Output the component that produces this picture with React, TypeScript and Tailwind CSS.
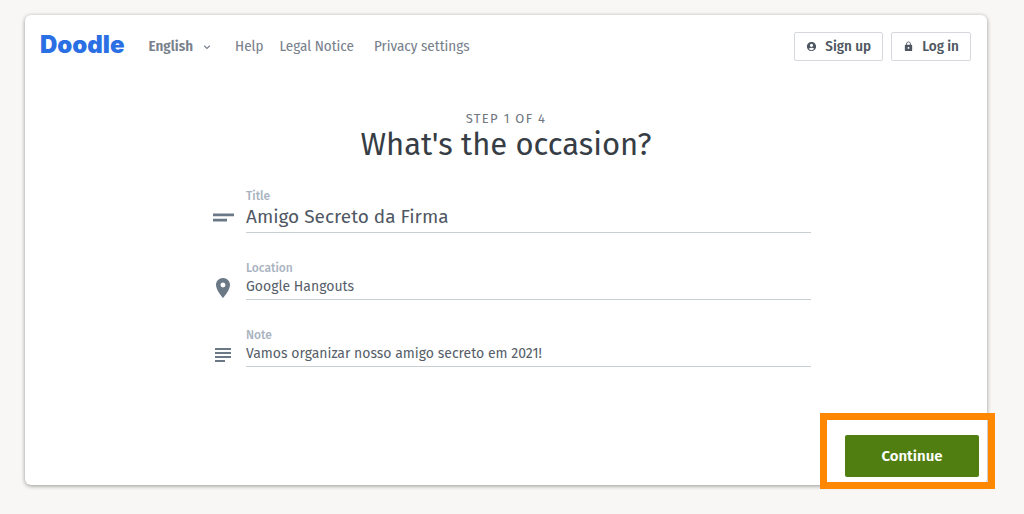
import { useState } from "react";
import type { ReactNode } from "react";
import { MdAccountCircle, MdLock, MdPlace, MdSubject } from "react-icons/md";

type FieldProps = {
  id: string;
  label: string;
  initial: string;
  icon: ReactNode;
  large?: boolean;
};

function ShortTextIcon() {
  return (
    <svg className="size-6" viewBox="0 0 24 24" fill="currentColor">
      <path d="M2 8.5h21v2.7H2zM2 13.7h14v2.7H2z" />
    </svg>
  );
}

function Field({ id, label, initial, icon, large = false }: FieldProps) {
  const [value, setValue] = useState(initial);
  return (
    <div className="flex items-end gap-[11px] pl-2.5">
      <span className={large ? "pb-1 text-[#6b7885]" : "text-[#6b7885]"}>{icon}</span>
      <div className="flex min-w-0 flex-1 flex-col border-b border-[#c8cfd3]">
        <label htmlFor={id} className="text-xs leading-4 font-medium text-[#a9b3c1]">
          {label}
        </label>
        <input
          id={id}
          type="text"
          value={value}
          onChange={(e) => setValue(e.target.value)}
          className={
            large
              ? "h-7 w-full bg-transparent pb-0.5 text-[19px] text-[#4f5864] outline-none"
              : "h-[23px] w-full bg-transparent pb-0.5 text-sm text-[#565e69] outline-none"
          }
        />
      </div>
    </div>
  );
}

export default function App() {
  return (
    <div className="min-h-screen bg-[#f8f7f5] pt-[15px] pr-[37px] pb-[29px] pl-[25px] font-['Fira_Sans','Noto_Sans',sans-serif]">
      <div className="rounded-md bg-white shadow-[0_1px_4px_rgba(0,0,0,0.4)]">
        <header className="flex items-center justify-between pt-[17px] pr-4 pl-[15px] font-['Fira_Sans_Condensed','Fira_Sans','Noto_Sans',sans-serif]">
          <div className="flex items-center">
            <a href="#" className="pb-1 font-['Inter',sans-serif] text-2xl leading-6 font-black text-[#2a6fe3]">
              Doodle
            </a>
            <nav className="ml-6 flex items-center text-[15px] text-[#79818c]">
              <button type="button" className="flex items-center gap-2.5 font-semibold">
                English
                <svg className="size-2" viewBox="0 0 8 8" fill="none" stroke="currentColor" strokeWidth="1.2">
                  <path d="M1.2 2.8 4 5.4 6.8 2.8" />
                </svg>
              </button>
              <a href="#" className="ml-6">Help</a>
              <a href="#" className="ml-4">Legal Notice</a>
              <a href="#" className="ml-5">Privacy settings</a>
            </nav>
          </div>
          <div className="flex gap-2 text-[15px] font-medium text-[#4d5661]">
            <button type="button" className="flex h-[29px] items-center gap-2 rounded-xs border border-[#d5d9de] px-[11px]">
              <MdAccountCircle className="size-[11px]" />
              Sign up
            </button>
            <button type="button" className="flex h-[29px] items-center gap-2 rounded-xs border border-[#d5d9de] px-[11px]">
              <MdLock className="size-[11px]" />
              Log in
            </button>
          </div>
        </header>

        <main>
          <div className="pt-[50px] text-center">
            <p className="text-[13px] leading-4 tracking-widest text-[#6f7680]">STEP 1 OF 4</p>
            <h1 className="text-[31px] leading-9 text-[#363d45]">What's the occasion?</h1>
          </div>
          <form onSubmit={(e) => e.preventDefault()}>
            <div className="mx-auto flex max-w-[610px] flex-col gap-[27px] pt-[25px]">
              <Field id="title" label="Title" initial="Amigo Secreto da Firma" large icon={<ShortTextIcon />} />
              <Field id="location" label="Location" initial="Google Hangouts" icon={<MdPlace className="size-6" />} />
              <Field id="note" label="Note" initial="Vamos organizar nosso amigo secreto em 2021!" icon={<MdSubject className="size-6" />} />
            </div>
            <div className="flex justify-end pt-[68px] pr-2 pb-2">
              <div className="relative">
                <button type="submit" className="h-[42px] w-[134px] rounded-xs bg-[#507e10] text-[15px] font-semibold text-white">
                  Continue
                </button>
                <div className="pointer-events-none absolute -top-[22px] -right-4 -bottom-3 -left-[25px] border-7 border-[#ff8800]" />
              </div>
            </div>
          </form>
        </main>
      </div>
    </div>
  );
}
